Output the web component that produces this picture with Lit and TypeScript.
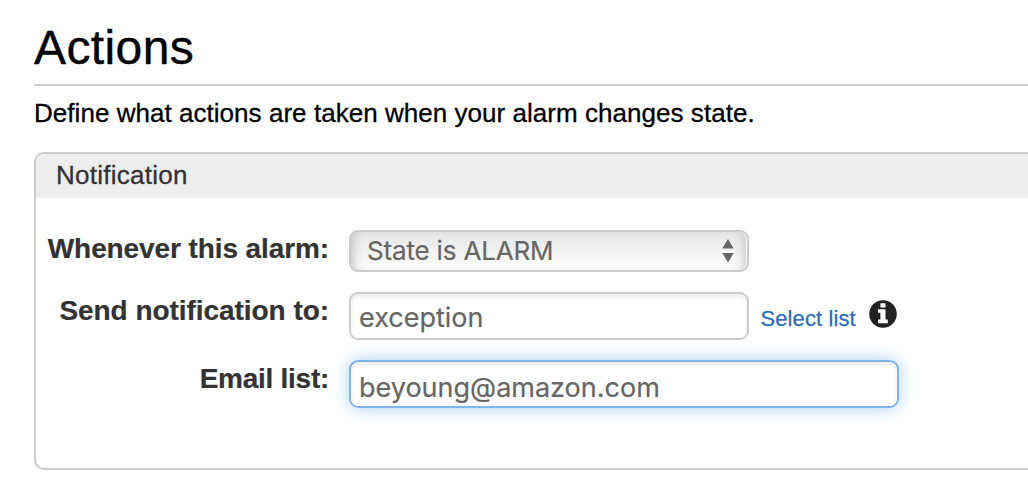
import { LitElement, html, css } from "lit";
import { customElement } from "lit/decorators.js";

@customElement("app-root")
export class AppRoot extends LitElement {
  static styles = css`
    :host {
      display: block;
      box-sizing: border-box;
      height: 498px;
      overflow: hidden;
      padding-left: 34px;
      background: #fff;
      color: #000;
      font-family: "Liberation Sans", Arial, sans-serif;
    }
    * {
      box-sizing: border-box;
    }
    h1 {
      margin: 0;
      height: 86px;
      padding-top: 20px;
      border-bottom: 2px solid #ccc;
      font-size: 48px;
      line-height: 56px;
      font-weight: 400;
      letter-spacing: 0.4px;
      -webkit-text-stroke: 0.4px;
    }
    .intro {
      margin: 12px 0 24px;
      font-size: 26px;
      line-height: 30px;
      white-space: nowrap;
      letter-spacing: 0.04px;
      -webkit-text-stroke: 0.3px;
    }
    .panel {
      height: 318px;
      border: 2px solid #ccc;
      border-right: 0;
      border-radius: 10px 0 0 10px;
      overflow: hidden;
    }
    .head {
      height: 44px;
      padding-left: 20px;
      background: #ededed;
      color: #333;
      font-size: 26px;
      line-height: 42px;
      letter-spacing: 0.25px;
      -webkit-text-stroke: 0.3px;
    }
    .form {
      display: grid;
      grid-template-columns: 293px 550px;
      grid-template-rows: 42px 48px 48px;
      column-gap: 20px;
      row-gap: 20px;
      padding-top: 32px;
    }
    .label {
      padding-top: 3px;
      text-align: right;
      color: #333;
      font-size: 28px;
      line-height: 32px;
      font-weight: 700;
      white-space: nowrap;
      letter-spacing: -0.1px;
      -webkit-text-stroke: 0.2px;
    }
    .send {
      letter-spacing: -0.05px;
    }
    .mail {
      letter-spacing: -0.27px;
    }
    .line {
      display: flex;
      align-items: flex-start;
    }
    .box {
      border: 2px solid #ccc;
      border-radius: 9px;
      color: #666;
      font-family: Inter, "Noto Sans", sans-serif;
      white-space: nowrap;
      -webkit-text-stroke: 0.2px;
    }
    .select {
      display: flex;
      justify-content: space-between;
      width: 400px;
      height: 42px;
      padding: 0 13px 0 16px;
      background: linear-gradient(#e6e6e6, #fdfdfd);
      box-shadow: inset -1px 0 1px #fff, inset 9px 0 8px -6px #c8c8c8,
        inset -11px 0 8px -7px #ccc;
      font-size: 26px;
      line-height: 38px;
      letter-spacing: -0.17px;
    }
    .arrows {
      width: 12px;
      height: 24px;
      margin-top: 7px;
    }
    .field {
      width: 400px;
      height: 48px;
      padding-left: 8px;
      box-shadow: inset 0 3px 4px rgba(0, 0, 0, 0.08);
      font-size: 27px;
      line-height: 48px;
    }
    .email {
      width: 550px;
      border-color: #7fb5ea;
      box-shadow: inset 0 3px 4px rgba(0, 0, 0, 0.08),
        0 0 16px rgba(82, 160, 235, 0.5);
      line-height: 52px;
    }
    .link {
      margin: 14px 0 0 11.5px;
      color: #2a6db5;
      font-size: 22px;
      line-height: 26px;
      width: 108.5px;
      white-space: nowrap;
      letter-spacing: 0.1px;
      -webkit-text-stroke: 0.25px;
    }
    .info {
      width: 28px;
      height: 28px;
      margin-top: 8px;
    }
  `;

  render() {
    return html`
      <h1>Actions</h1>
      <p class="intro">Define what actions are taken when your alarm changes state.</p>
      <section class="panel">
        <div class="head">Notification</div>
        <div class="form">
          <div class="label">Whenever this alarm:</div>
          <div class="line">
            <div class="box select">
              <span class="state">State is ALARM</span>
              <svg class="arrows" viewBox="0 0 12 24">
                <path d="M6 0L11.7 9.5H.3ZM.3 14H11.7L6 23.5Z" fill="#666" />
              </svg>
            </div>
          </div>
          <div class="label send">Send notification to:</div>
          <div class="line">
            <div class="box field">exception</div>
            <span class="link">Select list</span>
            <svg class="info" viewBox="0 0 28 28">
              <circle cx="14" cy="14" r="13.8" fill="#222" />
              <path d="M11.4 3.2h5.1v4.4h-5.1ZM9 9.2h7.5v10.4h2.3v3.6H9v-3.6h2.4v-6.8H9Z" fill="#fff" />
            </svg>
          </div>
          <div class="label mail">Email list:</div>
          <div class="line">
            <div class="box field email">beyoung@amazon.com</div>
          </div>
        </div>
      </section>
    `;
  }
}
